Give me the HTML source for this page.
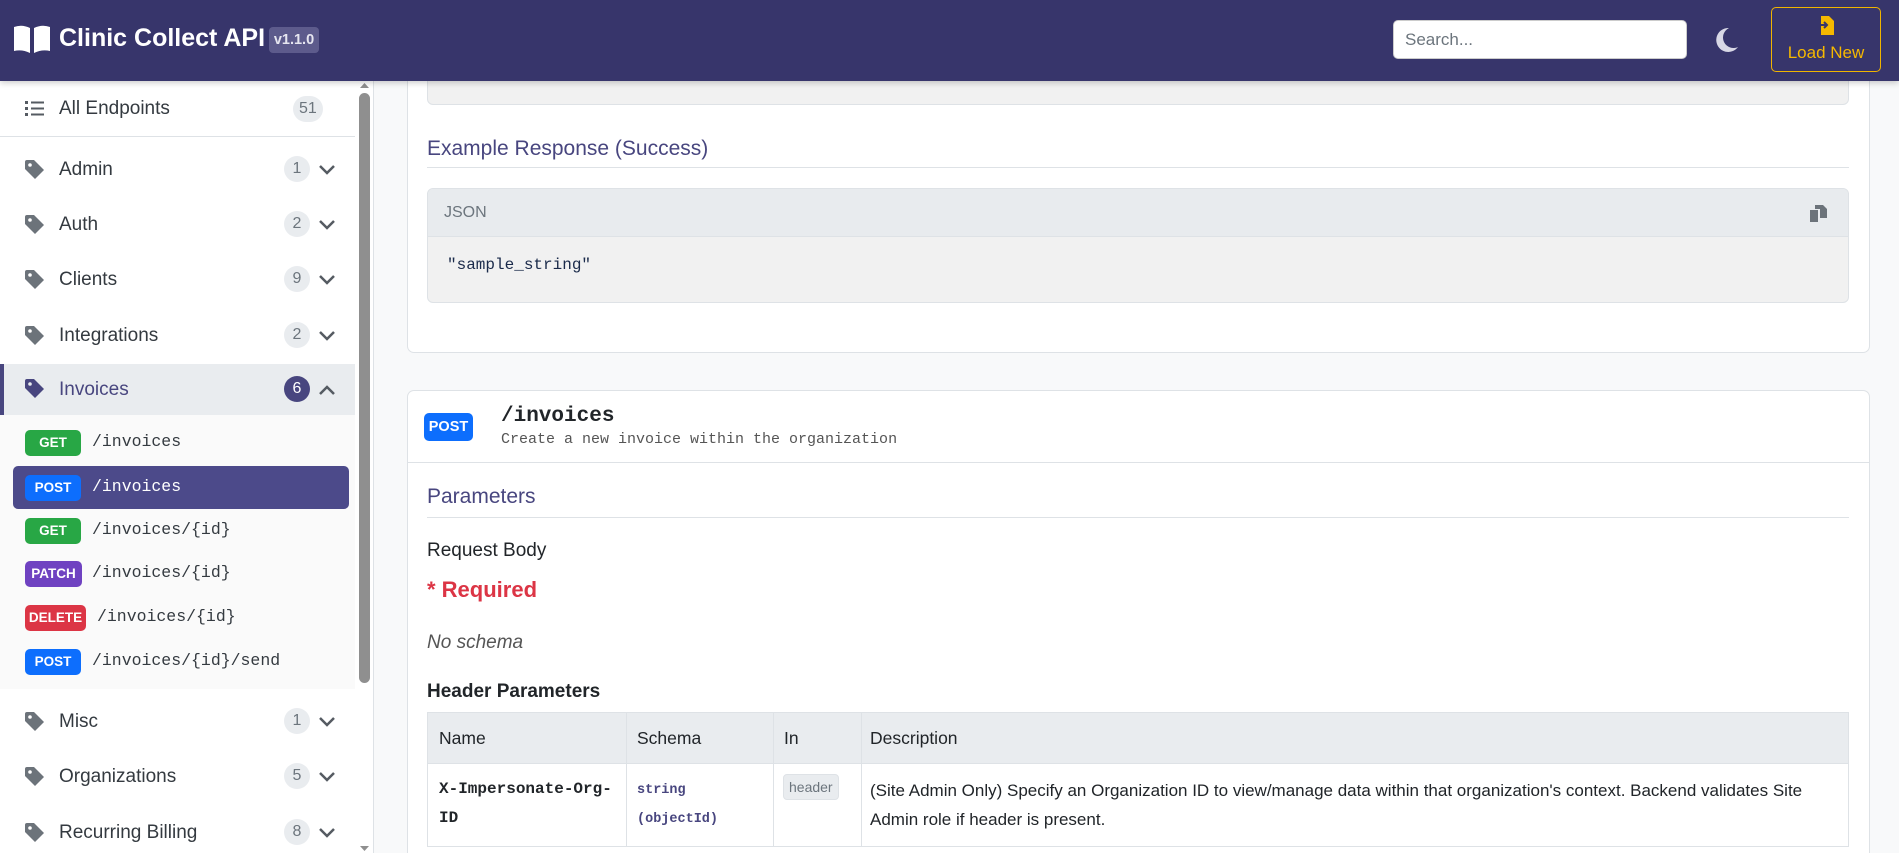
<!DOCTYPE html>
<html><head><meta charset="utf-8"><style>
*{box-sizing:border-box;margin:0;padding:0}
html{width:1899px;height:853px;overflow:hidden}
body{width:1899px;height:853px;overflow:hidden;background:#f8f9fa;font-family:"Liberation Sans",sans-serif;color:#212529;position:relative}
.hdr{position:absolute;left:0;top:0;width:1899px;height:81px;background:#37356b;z-index:5;box-shadow:0 2px 6px rgba(0,0,0,.2)}
.abs{position:absolute}
.side{position:absolute;left:0;top:81px;width:374px;height:772px;background:#fff;border-right:1px solid #dee2e6}
.row{position:absolute;left:0;width:355px;height:55px;display:flex;align-items:center;font-size:19px;color:#343a40}
.row .ic{position:absolute;left:25px;top:18px}
.row .lb{position:absolute;left:59px}
.cnt{position:absolute;height:26px;min-width:26px;border-radius:13px;background:#e9ecef;color:#6c757d;font-size:16px;text-align:center;line-height:26px;padding:0 6px}
.chev{position:absolute;left:318px}
.ep{position:absolute;left:13px;width:336px;height:43px}
.badge{position:absolute;left:12px;top:9px;height:26px;border-radius:5px;color:#fff;font-weight:bold;font-size:13.5px;line-height:26px;text-align:center}
.path{position:absolute;top:11px;font-family:"Liberation Mono",monospace;font-size:16.5px;color:#343a40}
.card{position:absolute;left:407px;width:1463px;background:#fff;border:1px solid #dee2e6;border-radius:7px}
.h4{position:absolute;left:427px;width:1422px;font-size:21px;color:#48467f;border-bottom:1px solid #dee2e6}
td,th{border:1px solid #dee2e6;text-align:left;vertical-align:top}
</style></head><body>
<div class="hdr">
 <svg class="abs" style="left:14px;top:25px" width="36" height="28" viewBox="0 0 36 28"><path d="M0 2 Q8 -1 16 3 V28 Q8 24 0 26Z M20 3 Q28 -1 36 2 V26 Q28 24 20 28Z" fill="#fff"/></svg>
 <div class="abs" style="left:59px;top:24px;font-size:25px;font-weight:bold;color:#fff;white-space:nowrap">Clinic Collect API</div>
 <div class="abs" style="left:269px;top:27px;width:50px;height:26px;border-radius:4px;background:#5d5b8c;color:#e6e6f0;font-size:14.5px;font-weight:bold;line-height:26px;text-align:center">v1.1.0</div>
 <div class="abs" style="left:1393px;top:20px;width:294px;height:39px;border-radius:5px;background:#fff;border:1px solid #ccc;color:#6c757d;font-size:17px;line-height:37px;padding-left:11px">Search...</div>
 <svg class="abs" style="left:1716px;top:28px" width="22" height="24" viewBox="0 0 22 24"><path d="M13 0 A12 12 0 1 0 22 19 A10 10 0 0 1 13 0Z" fill="#d8d8e6"/></svg>
 <div class="abs" style="left:1771px;top:7px;width:110px;height:65px;border:1.5px solid #f0b400;border-radius:5px;color:#f5b800;font-size:17px;text-align:center">
  <svg style="position:absolute;left:44px;top:8px" width="20" height="19" viewBox="0 0 20 19"><path d="M5 0 H13 L18 5 V19 H5Z" fill="#f5b800"/><path d="M0 9 H11 M8 6 L11 9 L8 12" stroke="#37356b" stroke-width="2" fill="none"/></svg>
  <div style="position:absolute;left:0;right:0;top:35px">Load New</div>
 </div>
</div>

<div class="side">
 <div class="row" style="top:0;height:56px;border-bottom:1px solid #dee2e6">
  <svg class="ic" width="20" height="18" viewBox="0 0 20 18" style="top:19px"><g fill="#555b62"><rect x="0" y="1" width="3" height="3"/><rect x="0" y="7" width="3" height="3"/><rect x="0" y="13" width="3" height="3"/><rect x="6" y="1.5" width="13" height="2"/><rect x="6" y="7.5" width="13" height="2"/><rect x="6" y="13.5" width="13" height="2"/></g></svg>
  <span class="lb">All Endpoints</span><span class="cnt" style="left:293px;top:15px">51</span></div>
</div>
<div class="abs" style="left:359px;top:93px;width:11px;height:590px;border-radius:6px;background:#8f8f8f"></div>
<svg class="abs" style="left:359px;top:81px" width="11" height="8"><path d="M1 7 L5.5 2 L10 7Z" fill="#8f8f8f"/></svg>
<svg class="abs" style="left:359px;top:845px" width="11" height="8"><path d="M1 1 L5.5 6 L10 1Z" fill="#8f8f8f"/></svg>

<div style="position:absolute;left:0;top:0">
 <div class="row" style="top:142px"><svg class="ic" width="20" height="20" viewBox="0 0 20 20"><path d="M0 2 Q0 0 2 0 H9 L19 10 L10 19 L0 9Z" fill="#6c737a"/><circle cx="5" cy="5" r="1.8" fill="#fff"/></svg><span class="lb">Admin</span><span class="cnt" style="left:284px;top:14px">1</span><svg class="chev" width="18" height="12" viewBox="0 0 18 12"><path d="M2 2 L9 9 L16 2" stroke="#555b62" stroke-width="2.5" fill="none"/></svg></div>
 <div class="row" style="top:197px"><svg class="ic" width="20" height="20" viewBox="0 0 20 20"><path d="M0 2 Q0 0 2 0 H9 L19 10 L10 19 L0 9Z" fill="#6c737a"/><circle cx="5" cy="5" r="1.8" fill="#fff"/></svg><span class="lb">Auth</span><span class="cnt" style="left:284px;top:14px">2</span><svg class="chev" width="18" height="12" viewBox="0 0 18 12"><path d="M2 2 L9 9 L16 2" stroke="#555b62" stroke-width="2.5" fill="none"/></svg></div>
 <div class="row" style="top:252px"><svg class="ic" width="20" height="20" viewBox="0 0 20 20"><path d="M0 2 Q0 0 2 0 H9 L19 10 L10 19 L0 9Z" fill="#6c737a"/><circle cx="5" cy="5" r="1.8" fill="#fff"/></svg><span class="lb">Clients</span><span class="cnt" style="left:284px;top:14px">9</span><svg class="chev" width="18" height="12" viewBox="0 0 18 12"><path d="M2 2 L9 9 L16 2" stroke="#555b62" stroke-width="2.5" fill="none"/></svg></div>
 <div class="row" style="top:308px"><svg class="ic" width="20" height="20" viewBox="0 0 20 20"><path d="M0 2 Q0 0 2 0 H9 L19 10 L10 19 L0 9Z" fill="#6c737a"/><circle cx="5" cy="5" r="1.8" fill="#fff"/></svg><span class="lb">Integrations</span><span class="cnt" style="left:284px;top:14px">2</span><svg class="chev" width="18" height="12" viewBox="0 0 18 12"><path d="M2 2 L9 9 L16 2" stroke="#555b62" stroke-width="2.5" fill="none"/></svg></div>
 <div class="row" style="top:364px;height:51px;background:#e9ecef;color:#48467f;border-left:4px solid #48467f"><svg class="ic" width="20" height="20" viewBox="0 0 20 20" style="left:21px;top:15px"><path d="M0 2 Q0 0 2 0 H9 L19 10 L10 19 L0 9Z" fill="#48467f"/><circle cx="5" cy="5" r="1.8" fill="#e9ecef"/></svg><span class="lb" style="left:55px">Invoices</span><span class="cnt" style="left:280px;top:12px;background:#48467f;color:#fff">6</span><svg class="chev" width="18" height="12" viewBox="0 0 18 12" style="left:314px"><path d="M2 10 L9 3 L16 10" stroke="#555b62" stroke-width="2.5" fill="none"/></svg></div>
 <div class="abs" style="left:0;top:415px;width:355px;height:274px;background:#fafafa"></div>
 <div class="ep" style="top:421px"><span class="badge" style="background:#28a745;width:56px">GET</span><span class="path" style="left:79px">/invoices</span></div>
 <div class="ep" style="top:466px;background:#4c4a8a;border-radius:5px"><span class="badge" style="background:#0d6efd;width:56px">POST</span><span class="path" style="left:79px;color:#fff">/invoices</span></div>
 <div class="ep" style="top:509px"><span class="badge" style="background:#28a745;width:56px">GET</span><span class="path" style="left:79px">/invoices/{id}</span></div>
 <div class="ep" style="top:552px"><span class="badge" style="background:#6f42c1;width:57px">PATCH</span><span class="path" style="left:79px">/invoices/{id}</span></div>
 <div class="ep" style="top:596px"><span class="badge" style="background:#dc3545;width:61px">DELETE</span><span class="path" style="left:84px">/invoices/{id}</span></div>
 <div class="ep" style="top:640px"><span class="badge" style="background:#0d6efd;width:56px">POST</span><span class="path" style="left:79px">/invoices/{id}/send</span></div>
 <div class="row" style="top:694px"><svg class="ic" width="20" height="20" viewBox="0 0 20 20"><path d="M0 2 Q0 0 2 0 H9 L19 10 L10 19 L0 9Z" fill="#6c737a"/><circle cx="5" cy="5" r="1.8" fill="#fff"/></svg><span class="lb">Misc</span><span class="cnt" style="left:284px;top:14px">1</span><svg class="chev" width="18" height="12" viewBox="0 0 18 12"><path d="M2 2 L9 9 L16 2" stroke="#555b62" stroke-width="2.5" fill="none"/></svg></div>
 <div class="row" style="top:749px"><svg class="ic" width="20" height="20" viewBox="0 0 20 20"><path d="M0 2 Q0 0 2 0 H9 L19 10 L10 19 L0 9Z" fill="#6c737a"/><circle cx="5" cy="5" r="1.8" fill="#fff"/></svg><span class="lb">Organizations</span><span class="cnt" style="left:284px;top:14px">5</span><svg class="chev" width="18" height="12" viewBox="0 0 18 12"><path d="M2 2 L9 9 L16 2" stroke="#555b62" stroke-width="2.5" fill="none"/></svg></div>
 <div class="row" style="top:805px"><svg class="ic" width="20" height="20" viewBox="0 0 20 20"><path d="M0 2 Q0 0 2 0 H9 L19 10 L10 19 L0 9Z" fill="#6c737a"/><circle cx="5" cy="5" r="1.8" fill="#fff"/></svg><span class="lb">Recurring Billing</span><span class="cnt" style="left:284px;top:14px">8</span><svg class="chev" width="18" height="12" viewBox="0 0 18 12"><path d="M2 2 L9 9 L16 2" stroke="#555b62" stroke-width="2.5" fill="none"/></svg></div>
</div>

<div class="card" style="top:40px;height:313px"></div>
<div class="abs" style="left:427px;top:60px;width:1422px;height:45px;background:#f1f1f1;border:1px solid #dee2e6;border-radius:0 0 6px 6px"></div>
<div class="h4" style="top:137px;height:31px">Example Response (Success)</div>
<div class="abs" style="left:427px;top:188px;width:1422px;height:115px;background:#f1f1f1;border:1px solid #dee2e6;border-radius:6px;overflow:hidden">
 <div style="height:48px;background:#e8ebee;border-bottom:1px solid #dee2e6;font-size:16px;color:#6c757d;padding:15px 0 0 16px">JSON</div>
 <svg style="position:absolute;left:1382px;top:16px" width="18" height="17" viewBox="0 0 18 17"><path d="M0 5 H8 V17 H0Z M5 0 H13 L17 4 V13 H10 V4 H5Z" fill="#6c737a"/></svg>
 <div style="font-family:'Liberation Mono',monospace;font-size:16px;color:#1a2a4a;padding:19px 0 0 19px">"sample_string"</div>
</div>

<div class="card" style="top:390px;height:463px;border-bottom:none;border-radius:7px 7px 0 0"></div>
<div class="abs" style="left:408px;top:462px;width:1461px;border-top:1px solid #dee2e6"></div>
<div class="abs" style="left:424px;top:413px;width:49px;height:28px;border-radius:5px;background:#0d6efd;color:#fff;font-weight:bold;font-size:14.5px;line-height:28px;text-align:center">POST</div>
<div class="abs" style="left:501px;top:405px;font-family:'Liberation Mono',monospace;font-weight:bold;font-size:21px;color:#212529">/invoices</div>
<div class="abs" style="left:501px;top:431px;font-family:'Liberation Mono',monospace;font-size:15px;color:#555">Create a new invoice within the organization</div>
<div class="h4" style="top:485px;height:33px;font-size:21px">Parameters</div>
<div class="abs" style="left:427px;top:540px;font-size:19px;color:#212529">Request Body</div>
<div class="abs" style="left:427px;top:577px;font-size:22px;font-weight:bold;color:#dc3545">* Required</div>
<div class="abs" style="left:427px;top:632px;font-size:19px;font-style:italic;color:#555">No schema</div>
<div class="abs" style="left:427px;top:681px;font-size:19px;font-weight:bold;color:#212529">Header Parameters</div>
<table class="abs" style="left:427px;top:712px;width:1422px;border-collapse:collapse;font-size:17.5px">
 <tr style="background:#e9ecef;height:51px"><th style="width:199px;font-weight:normal;padding:13px 11px;vertical-align:middle">Name</th><th style="width:147px;font-weight:normal;padding:13px 10px;vertical-align:middle">Schema</th><th style="width:88px;font-weight:normal;padding:13px 10px;vertical-align:middle">In</th><th style="font-weight:normal;padding:13px 8px;vertical-align:middle">Description</th></tr>
 <tr style="height:82px"><td style="padding:11px 11px;font-family:'Liberation Mono',monospace;font-weight:bold;font-size:16px;line-height:29px">X-Impersonate-Org-ID</td>
 <td style="padding:12px 10px;font-family:'Liberation Mono',monospace;font-weight:bold;font-size:13.5px;color:#48467f;line-height:29px">string<br>(objectId)</td>
 <td style="padding:10px 9px"><span style="display:inline-block;background:#e9ecef;border:1px solid #dee2e6;border-radius:4px;color:#6c757d;font-size:14px;padding:4px 5px">header</span></td>
 <td style="padding:12px 8px;line-height:29px;font-size:17px">(Site Admin Only) Specify an Organization ID to view/manage data within that organization's context. Backend validates Site Admin role if header is present.</td></tr>
</table>
</body></html>
